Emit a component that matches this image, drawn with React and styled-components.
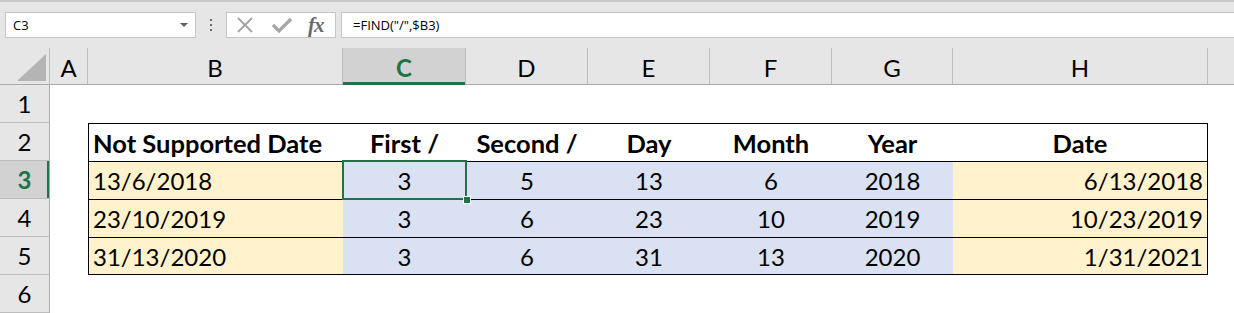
import React from "react";
import styled, { createGlobalStyle } from "styled-components";

const GlobalStyle = createGlobalStyle`
  html, body {
    margin: 0;
    padding: 0;
    background: #ffffff;
    overflow: hidden;
  }
`;

const COLS = "50px 38px 255px 123px 122px 122px 122px 121px 255px 1fr";
const GREEN = "#217346";

const Window = styled.div`
  width: 1234px;
  height: 313px;
  display: flex;
  flex-direction: column;
  font-family: Lato, "Open Sans", sans-serif;
  color: #000;
`;

const FormulaBar = styled.div`
  height: 48px;
  box-sizing: border-box;
  background: #e6e6e6;
  border-top: 2px solid #c8c8c8;
  display: flex;
  align-items: flex-start;
  padding: 10px 0 0 5px;
  gap: 0;
`;

const NameBox = styled.div`
  width: 191px;
  height: 26px;
  box-sizing: border-box;
  background: #fff;
  border: 1px solid #c6c6c6;
  display: flex;
  align-items: center;
  justify-content: space-between;
  padding: 0 7px 0 7px;
  font-family: "Open Sans", "Noto Sans", sans-serif;
  font-size: 13px;
`;

const Caret = styled.span`
  width: 0;
  height: 0;
  border-left: 4px solid transparent;
  border-right: 4px solid transparent;
  border-top: 4px solid #606060;
`;

const Grip = styled.div`
  width: 30px;
  height: 26px;
  display: flex;
  flex-direction: column;
  align-items: center;
  justify-content: center;
  gap: 3px;

  span {
    width: 2px;
    height: 2px;
    background: #6a6a6a;
  }
`;

const IconBox = styled.div`
  width: 110px;
  height: 26px;
  box-sizing: border-box;
  background: #fff;
  border: 1px solid #c6c6c6;
  display: flex;
  align-items: center;
  padding: 0 0 0 7px;
  gap: 14px;
`;

const Fx = styled.span`
  font-family: "Liberation Serif", "DejaVu Serif", serif;
  font-style: italic;
  font-weight: bold;
  font-size: 21px;
  line-height: 1;
  color: #6b6b6b;
  letter-spacing: -1px;
  margin-left: 0;
`;

const FormulaInput = styled.div`
  flex: 1;
  height: 26px;
  margin-left: 5px;
  box-sizing: border-box;
  background: #fff;
  border: 1px solid #c6c6c6;
  border-right: none;
  display: flex;
  align-items: center;
  padding-left: 11px;
  font-family: "Open Sans", "Noto Sans", sans-serif;
  font-size: 13px;
`;

const Row = styled.div`
  display: grid;
  grid-template-columns: ${COLS};
  height: ${(p) => p.$h}px;
`;

const HeaderRow = styled(Row)`
  background: #e6e6e6;
  border-bottom: 1px solid #ababab;
  box-sizing: border-box;
`;

const Corner = styled.div`
  border-right: 1px solid #bdbdbd;
  display: flex;
  align-items: flex-end;
  justify-content: flex-end;
  padding: 0 3px 3px 0;

  &::after {
    content: "";
    width: 0;
    height: 0;
    border-left: 29px solid transparent;
    border-bottom: 27px solid #b4b4b4;
  }
`;

const ColHead = styled.div`
  display: flex;
  align-items: center;
  justify-content: center;
  font-size: 24px;
  border-right: 1px solid #bdbdbd;
  background: ${(p) => (p.$active ? "#d2d2d2" : "transparent")};
  color: ${(p) => (p.$active ? GREEN : "#000")};
  font-weight: ${(p) => (p.$active ? 700 : 400)};
  box-shadow: ${(p) => (p.$active ? `inset 0 -3px 0 ${GREEN}` : "none")};
  margin-bottom: ${(p) => (p.$active ? "-1px" : "0")};
  padding-top: 2px;

  &:last-child {
    border-right: none;
  }
`;

const RowHead = styled.div`
  background: ${(p) => (p.$active ? "#d2d2d2" : "#e6e6e6")};
  border-right: 1px solid #ababab;
  border-bottom: 1px solid #bdbdbd;
  box-sizing: border-box;
  display: flex;
  align-items: center;
  justify-content: center;
  font-size: 24px;
  color: ${(p) => (p.$active ? GREEN : "#000")};
  font-weight: ${(p) => (p.$active ? 700 : 400)};
  box-shadow: ${(p) => (p.$active ? `inset -2px 0 0 ${GREEN}` : "none")};
`;

const Cell = styled.div`
  position: relative;
  box-sizing: border-box;
  display: flex;
  align-items: center;
  justify-content: ${(p) => p.$align || "center"};
  padding: 0 4px;
  font-size: ${(p) => (p.$bold ? 25.5 : 24)}px;
  font-weight: ${(p) => (p.$bold ? 700 : 400)};
  white-space: nowrap;
  background: ${(p) => p.$bg || "#ffffff"};
  border-top: ${(p) => (p.$top ? "1px solid #000" : "none")};
  border-bottom: ${(p) => (p.$bottom ? "1px solid #000" : "none")};
  border-left: ${(p) => (p.$left ? "1px solid #000" : "none")};
  border-right: ${(p) => (p.$right ? "1px solid #000" : "none")};
  outline: ${(p) => (p.$selected ? `2px solid ${GREEN}` : "none")};
  outline-offset: -1px;
  z-index: ${(p) => (p.$selected ? 2 : 0)};
`;

const Handle = styled.span`
  position: absolute;
  right: -5px;
  bottom: -5px;
  width: 6px;
  height: 6px;
  background: ${GREEN};
  border: 1px solid #fff;
`;

const CREAM = "#fff2cc";
const BLUE = "#d9e1f2";

const headers = ["Not Supported Date", "First /", "Second /", "Day", "Month", "Year", "Date"];
const data = [
  ["13/6/2018", "3", "5", "13", "6", "2018", "6/13/2018"],
  ["23/10/2019", "3", "6", "23", "10", "2019", "10/23/2019"],
  ["31/13/2020", "3", "6", "31", "13", "2020", "1/31/2021"],
];

const letters = ["A", "B", "C", "D", "E", "F", "G", "H", ""];

const XIcon = () => (
  <svg width="22" height="22" viewBox="0 0 22 22">
    <path d="M4 4 L18 18 M18 4 L4 18" stroke="#a6a6a6" strokeWidth="2" fill="none" />
  </svg>
);

const CheckIcon = () => (
  <svg width="24" height="22" viewBox="0 0 24 22">
    <path d="M3 11 L9 17 L21 5" stroke="#a6a6a6" strokeWidth="3.2" fill="none" />
  </svg>
);

const Blank = ({ n }) => (
  <>
    {Array.from({ length: n }).map((_, i) => (
      <Cell key={i} />
    ))}
  </>
);

const App = () => {
  return (
    <Window>
      <GlobalStyle />
      <FormulaBar>
        <NameBox>
          <span>C3</span>
          <Caret />
        </NameBox>
        <Grip>
          <span />
          <span />
          <span />
        </Grip>
        <IconBox>
          <XIcon />
          <CheckIcon />
          <Fx>fx</Fx>
        </IconBox>
        <FormulaInput>=FIND("/",$B3)</FormulaInput>
      </FormulaBar>

      <HeaderRow $h={37}>
        <Corner />
        {letters.map((l, i) => (
          <ColHead key={i} $active={l === "C"}>
            {l}
          </ColHead>
        ))}
      </HeaderRow>

      <Row $h={38}>
        <RowHead>1</RowHead>
        <Blank n={9} />
      </Row>

      <Row $h={38}>
        <RowHead>2</RowHead>
        <Cell />
        {headers.map((h, i) => (
          <Cell
            key={i}
            $bold
            $top
            $left={i === 0}
            $right={i === headers.length - 1}
            $align={i === 0 ? "flex-start" : "center"}
          >
            {h}
          </Cell>
        ))}
        <Cell />
      </Row>

      {data.map((r, ri) => (
        <Row $h={38} key={ri}>
          <RowHead $active={ri === 0}>{ri + 3}</RowHead>
          <Cell />
          {r.map((v, i) => {
            const edge = i === 0 || i === r.length - 1;
            return (
              <Cell
                key={i}
                $top
                $bottom={ri === data.length - 1}
                $left={i === 0}
                $right={i === r.length - 1}
                $bg={edge ? CREAM : BLUE}
                $align={i === 0 ? "flex-start" : i === r.length - 1 ? "flex-end" : "center"}
                $selected={ri === 0 && i === 1}
              >
                {v}
                {ri === 0 && i === 1 && <Handle />}
              </Cell>
            );
          })}
          <Cell />
        </Row>
      ))}

      <Row $h={38}>
        <RowHead>6</RowHead>
        <Blank n={9} />
      </Row>
    </Window>
  );
};

export default App;
